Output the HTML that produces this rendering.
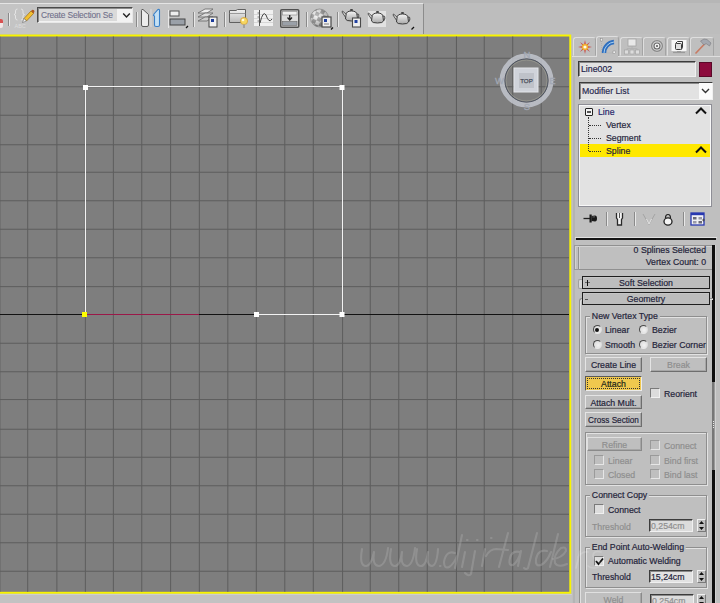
<!DOCTYPE html>
<html><head><meta charset="utf-8"><style>
*{margin:0;padding:0;box-sizing:border-box}
html,body{width:720px;height:603px;overflow:hidden;background:#bdbdbd;font-family:"Liberation Sans",sans-serif;font-size:9.5px;color:#24243a}
div,span,svg{position:absolute}
.t{white-space:nowrap;line-height:10px;letter-spacing:0px;-webkit-text-stroke:0.2px currentColor;transform:scaleX(0.92);transform-origin:0 0}
.d{color:#8e8e8e}
.btn{background:#bfbfbf;border:1px solid;border-color:#e4e4e4 #6e6e6e #6e6e6e #e4e4e4;box-shadow:inset -1px -1px 0 #a6a6a6}
.btn .t{left:-12px;right:-12px;text-align:center;transform-origin:50% 0}
.grp{border:1px solid #8e8e8e;box-shadow:1px 1px 0 #e2e2e2, inset 1px 1px 0 #e2e2e2}
.lbl{background:#bfbfbf;padding:0 2px}
.chk{width:10px;height:10px;background:#dcdcdc;border:1px solid;border-color:#7a7a7a #f0f0f0 #f0f0f0 #7a7a7a}
.chkd{background:#bfbfbf;border-color:#9a9a9a #e6e6e6 #e6e6e6 #9a9a9a}
.rad{width:9px;height:9px;border-radius:50%;background:radial-gradient(circle at 60% 60%,#f2f2f2,#d4d4d4);border:1.3px solid;border-color:#4a4a4a #dedede #e8e8e8 #4a4a4a}
.fld{background:#e2e2e2;border:1px solid;border-color:#3c3c3c #f0f0f0 #f0f0f0 #3c3c3c;box-shadow:inset 1px 1px 0 #8a8a8a}
.hdr{background:#bdbdbd;border:1px solid #1e1e1e;box-shadow:inset 1px 1px 0 #c6c6c6}
.tab{border-radius:3px 3px 0 0;border:1px solid;border-color:#dedede #a4a4a4 transparent #dedede;background:#bfbfbf}
.sep{width:1px;background:#8a8a8a;box-shadow:1px 0 0 #e8e8e8}
</style></head><body>
<div style="left:0;top:0;width:720px;height:3px;background:#b6b6b6"></div>
<div style="left:0;top:3px;width:424px;height:31px;background:#c4c4c4;border-top:1px solid #e4e4e4;border-right:1px solid #8c8c8c"></div>
<div style="left:0;top:19px;width:2.5px;height:9px;background:linear-gradient(#d85050 0,#d85050 45%,#f2e6e6 45%);border-radius:0 2px 2px 0"></div>
<div class="sep" style="left:8px;top:13px;height:13px"></div>
<svg style="left:13px;top:8px" width="22" height="22" viewBox="0 0 22 22"><path d="M4.5 1 Q2.5 1 2.5 3 L2.5 5 Q2.5 6.5 1 6.5 Q2.5 6.5 2.5 8 L2.5 10 Q2.5 12 4.5 12" fill="none" stroke="#e4e4e4" stroke-width="1"/><path d="M8 1 Q10 1 10 3 L10 5 Q10 6.5 11.5 6.5 Q10 6.5 10 8 L10 10 Q10 12 8 12" fill="none" stroke="#e4e4e4" stroke-width="1"/><path d="M11 10.5 L18 3 L20.5 5.5 L13.5 13 Z" fill="#f2c030" stroke="#9a6a10" stroke-width="0.7"/><path d="M18 3 L19 2 Q20 1.3 21 2.3 Q21.7 3.3 21.3 4 L20.5 5.5 Z" fill="#b05a20"/><path d="M11 10.5 L13.5 13 L9.5 14.5 Z" fill="#f4f4f4" stroke="#555" stroke-width="0.5"/><text x="1.5" y="19.5" font-size="5.5" fill="#dcdcdc" font-family="Liberation Sans">ABC</text></svg>
<div style="left:37px;top:7px;width:96px;height:16px;background:#f2f2f2;border:1px solid;border-color:#4a4a4a #e8e8e8 #e8e8e8 #4a4a4a;box-shadow:inset 1px 1px 0 #8a8a8a"></div>
<div style="left:39px;top:9px;width:78px;height:12px;background:#dadada"></div>
<div class="t " style="left:40.5px;top:10px;color:#70708a;font-size:9.2px;letter-spacing:-0.2px;-webkit-text-stroke:0.1px #70708a">Create Selection Se</div>
<svg style="left:122px;top:12px" width="9" height="7" viewBox="0 0 9 7"><path d="M1.2 1.5 L4.5 5 L7.8 1.5" fill="none" stroke="#222" stroke-width="1.4"/></svg>
<div class="sep" style="left:136px;top:12px;height:15px"></div>
<svg style="left:140px;top:8px" width="22" height="20" viewBox="0 0 22 20"><path d="M1.5 2.5 Q1.5 1 3 1.5 L8.5 6.5 L8.5 17 Q8.5 18.5 7 18.5 L3 18.5 Q1.5 18.5 1.5 17 Z" fill="#ececec" stroke="#5a5a5a" stroke-width="1"/><path d="M11 1 L11 19" stroke="#e4e4e4" stroke-width="0.8"/><path d="M19.5 2.5 Q19.5 1 18 1.5 L14 6 L13.5 7.5 L14.5 8 L14.5 17 Q14.5 18.5 16 18.5 L18 18.5 Q19.5 18.5 19.5 17 Z" fill="#c4e0f4" stroke="#3a80c8" stroke-width="1.1"/></svg>
<svg style="left:167px;top:9px" width="22" height="20" viewBox="0 0 22 20"><path d="M1.5 1 L1.5 19" stroke="#e8e8e8" stroke-width="1"/><rect x="3" y="2" width="9" height="5" fill="#eee" stroke="#555" stroke-width="1"/><rect x="3" y="10" width="15" height="6" fill="#9aa0a8" stroke="#444" stroke-width="1"/><path d="M19 19 L21 17" stroke="#111" stroke-width="1.2"/></svg>
<div class="sep" style="left:193px;top:12px;height:15px"></div>
<svg style="left:197px;top:8px" width="22" height="20" viewBox="0 0 22 20"><path d="M1 5 L8 1 L16 1 L10 5 Z" fill="#eee" stroke="#666" stroke-width="0.8"/><path d="M1 9 L8 5 L16 5 L10 9 Z" fill="#ddd" stroke="#666" stroke-width="0.8"/><path d="M1 13 L8 9 L16 9 L10 13 Z" fill="#ccc" stroke="#666" stroke-width="0.8"/><rect x="12" y="9" width="8" height="10" fill="#f0f0f0" stroke="#444" stroke-width="1"/><rect x="14" y="11" width="3" height="3" fill="#1a3a9a"/></svg>
<div class="sep" style="left:224px;top:12px;height:15px"></div>
<svg style="left:228px;top:8px" width="24" height="22" viewBox="0 0 24 22"><defs><linearGradient id="fg" x1="0" y1="0" x2="0" y2="1"><stop offset="0" stop-color="#f2f2f2"/><stop offset="1" stop-color="#b8b8b8"/></linearGradient></defs><path d="M1.5 2.5 L8 2.5 L9.5 1.5 L17.5 1.5 L17.5 14.5 L1.5 14.5 Z" fill="url(#fg)" stroke="#606060" stroke-width="1"/><path d="M1.5 5.5 L17.5 5.5" stroke="#888" stroke-width="0.8"/><circle cx="16" cy="13" r="3.6" fill="#f6d660" stroke="#d09a30" stroke-width="0.7"/><circle cx="15" cy="12" r="1.3" fill="#fffbe0"/><rect x="15" y="16.5" width="2" height="3.5" fill="#a0a0a0"/></svg>
<svg style="left:254px;top:9px" width="20" height="18" viewBox="0 0 20 18"><rect x="0" y="1" width="19" height="16" fill="#f0f0f0"/><path d="M0 5.5 L19 5.5 M0 9.5 L19 9.5 M0 13.5 L19 13.5" stroke="#d0d0d0" stroke-width="0.8"/><path d="M5.5 1 L5.5 17" stroke="#555" stroke-width="1"/><path d="M3.5 4 L5 4 M3.5 8 L5 8 M3.5 12 L5 12" stroke="#555" stroke-width="0.8"/><path d="M6 14 Q9 1 12 6 Q15 15 18 10" fill="none" stroke="#444" stroke-width="1"/></svg>
<svg style="left:280px;top:9px" width="20" height="19" viewBox="0 0 20 19"><rect x="0.75" y="0.75" width="18" height="17.5" rx="1" fill="#dcdcdc" stroke="#505050" stroke-width="1.5"/><rect x="2.5" y="2.5" width="14.5" height="3.5" fill="#eeeeee" stroke="#888" stroke-width="0.6"/><rect x="2.5" y="12.5" width="14.5" height="3.8" fill="#9aa0a8" stroke="#666" stroke-width="0.6"/><path d="M9.75 6 L9.75 10.5 M7.5 8.5 L9.75 11 L12 8.5" fill="none" stroke="#222" stroke-width="1.3"/></svg>
<div class="sep" style="left:306px;top:12px;height:15px"></div>
<svg style="left:309px;top:8px" width="25" height="22" viewBox="0 0 25 22"><defs><pattern id="ck" width="8" height="8" patternUnits="userSpaceOnUse" patternTransform="rotate(25)"><rect width="8" height="8" fill="#f4f4f4"/><rect width="4" height="4" fill="#9a9a9a"/><rect x="4" y="4" width="4" height="4" fill="#9a9a9a"/></pattern><radialGradient id="sh" cx="0.35" cy="0.35" r="0.7"><stop offset="0" stop-color="#fff" stop-opacity="0.3"/><stop offset="1" stop-color="#000" stop-opacity="0.35"/></radialGradient></defs><circle cx="10.5" cy="10" r="9" fill="url(#ck)"/><circle cx="10.5" cy="10" r="9" fill="url(#sh)" stroke="#777" stroke-width="0.6"/><rect x="13" y="9" width="9" height="10" fill="#eeeeee" stroke="#4a4a4a" stroke-width="1.2"/><rect x="15" y="11" width="3" height="3" fill="#2040a0"/><path d="M15 16 L20 16" stroke="#666" stroke-width="0.8"/><path d="M22 21.5 L24 19.5" stroke="#111" stroke-width="1.2"/></svg>
<div class="sep" style="left:337px;top:12px;height:15px"></div>
<svg style="left:341px;top:8px" width="22" height="22" viewBox="0 0 22 22"><defs><linearGradient id="tg" x1="0" y1="0" x2="0" y2="1"><stop offset="0" stop-color="#f6f6f6"/><stop offset="1" stop-color="#a8a8a8"/></linearGradient></defs><path d="M6 7 L1.5 3 L1 4 L5 10" fill="#e0e0e0" stroke="#444" stroke-width="0.9"/><path d="M15 6 Q19.5 5.5 17 10.5" fill="none" stroke="#555" stroke-width="1.1"/><path d="M5 7 Q5 3 10.5 3 Q16 3 16 7 L16.5 11 Q16 13 10.5 13 Q5 13 4.5 11 Z" fill="url(#tg)" stroke="#3c3c3c" stroke-width="1"/><rect x="9" y="1" width="3" height="2" rx="1" fill="#444"/><rect x="11.5" y="10" width="8" height="9" fill="#eeeeee" stroke="#4a4a4a" stroke-width="1.1"/><rect x="13.5" y="12" width="3" height="3" fill="#2040a0"/></svg>
<div style="left:368px;top:11px;width:18px;height:16px;background:#e2e2e2"></div>
<svg style="left:367px;top:10px" width="22" height="16" viewBox="0 0 22 16"><defs><linearGradient id="tg2" x1="0" y1="0" x2="0" y2="1"><stop offset="0" stop-color="#f6f6f6"/><stop offset="1" stop-color="#a8a8a8"/></linearGradient></defs><path d="M6 7 L1.5 3 L1 4 L5 10" fill="#e0e0e0" stroke="#444" stroke-width="0.9"/><path d="M15 6 Q19.5 5.5 17 10.5" fill="none" stroke="#555" stroke-width="1.1"/><path d="M5 7 Q5 3 10.5 3 Q16 3 16 7 L16.5 11 Q16 13 10.5 13 Q5 13 4.5 11 Z" fill="url(#tg2)" stroke="#3c3c3c" stroke-width="1"/><rect x="9" y="1" width="3" height="2" rx="1" fill="#444"/></svg>
<svg style="left:392px;top:11px" width="24" height="20" viewBox="0 0 24 20"><defs><linearGradient id="tg3" x1="0" y1="0" x2="0" y2="1"><stop offset="0" stop-color="#f6f6f6"/><stop offset="1" stop-color="#a8a8a8"/></linearGradient></defs><path d="M6 7 L1.5 3 L1 4 L5 10" fill="#e0e0e0" stroke="#444" stroke-width="0.9"/><path d="M15 6 Q19.5 5.5 17 10.5" fill="none" stroke="#555" stroke-width="1.1"/><path d="M5 7 Q5 3 10.5 3 Q16 3 16 7 L16.5 11 Q16 13 10.5 13 Q5 13 4.5 11 Z" fill="url(#tg3)" stroke="#3c3c3c" stroke-width="1"/><rect x="9" y="1" width="3" height="2" rx="1" fill="#444"/><path d="M19.5 18.5 L22 16" stroke="#111" stroke-width="1.2"/></svg>
<svg style="left:0;top:0" width="574" height="596" viewBox="0 0 574 596"><rect x="0" y="34.5" width="571.2" height="559.2" fill="#f8f400"/><rect x="0" y="36.5" width="569.3" height="555.3" fill="#7e7e7e"/></svg>
<div style="left:0;top:594px;width:572px;height:9px;background:#c2c2c2;border-top:1px solid #cecece"></div>
<svg style="left:0;top:0" width="570" height="592" viewBox="0 0 570 592"><defs><clipPath id="vc"><rect x="0" y="36.5" width="569.3" height="555.3"/></clipPath></defs><g clip-path="url(#vc)"><g fill="#5d5d5d"><rect x="-0.60" y="36" width="1" height="556"/><rect x="27.19" y="36" width="1" height="556"/><rect x="56.38" y="36" width="1" height="556"/><rect x="84.87" y="36" width="1" height="556"/><rect x="112.86" y="36" width="1" height="556"/><rect x="141.25" y="36" width="1" height="556"/><rect x="170.09" y="36" width="1" height="556"/><rect x="198.83" y="36" width="1" height="556"/><rect x="227.32" y="36" width="1" height="556"/><rect x="255.81" y="36" width="1" height="556"/><rect x="284.30" y="36" width="1" height="556"/><rect x="312.79" y="36" width="1" height="556"/><rect x="342.08" y="36" width="1" height="556"/><rect x="369.77" y="36" width="1" height="556"/><rect x="398.26" y="36" width="1" height="556"/><rect x="426.75" y="36" width="1" height="556"/><rect x="455.94" y="36" width="1" height="556"/><rect x="483.73" y="36" width="1" height="556"/><rect x="512.22" y="36" width="1" height="556"/><rect x="540.71" y="36" width="1" height="556"/><rect x="0" y="57.75" width="569" height="1"/><rect x="0" y="86.25" width="569" height="1"/><rect x="0" y="114.75" width="569" height="1"/><rect x="0" y="144.25" width="569" height="1"/><rect x="0" y="171.75" width="569" height="1"/><rect x="0" y="200.25" width="569" height="1"/><rect x="0" y="228.75" width="569" height="1"/><rect x="0" y="257.25" width="569" height="1"/><rect x="0" y="286.15" width="569" height="1"/><rect x="0" y="342.75" width="569" height="1"/><rect x="0" y="371.25" width="569" height="1"/><rect x="0" y="399.05" width="569" height="1"/><rect x="0" y="428.75" width="569" height="1"/><rect x="0" y="456.75" width="569" height="1"/><rect x="0" y="485.25" width="569" height="1"/><rect x="0" y="513.75" width="569" height="1"/><rect x="0" y="542.25" width="569" height="1"/><rect x="0" y="570.75" width="569" height="1"/></g><g fill="none" stroke="#acacac" stroke-opacity="0.4" stroke-width="2.1" stroke-linecap="round" stroke-linejoin="round"><path d="M362,549 Q359,566 366,566 Q371,566 374,552 Q372,566 379,566 Q386,565 388,548"/><path d="M391,549 Q388,566 395,566 Q400,566 402,552 Q400,566 407,566 Q413,565 415,548"/><path d="M417,549 Q414,566 421,566 Q426,566 428,552 Q426,566 432,566 Q437,565 438,549"/><path d="M440,566 L440.5,566"/><path d="M455,553 Q446,550 444,562 Q444,569 449,567 Q454,564 457,556 M462,535 L455,568"/><path d="M465,552 L462,567 M467,540 L467.5,540"/><path d="M475,551 L471,574 Q469,577 465,573 M477,540 L477.5,540"/><path d="M485,549 L482,566 M491,538 L491.5,538"/><path d="M508,533 L499,567 M486,556 Q490,549 496,549 L508,550"/><path d="M520,552 Q512,550 510,558 Q508,566 513,565 Q518,562 521,551 L518,566"/><path d="M537,533 L528,568 Q526,570 524,568"/><path d="M547,551 Q538,549 536,559 Q535,567 541,565 Q547,562 551,552 M558,534 L550,567"/><path d="M553,559 Q562,558 566,551 Q566,546 561,548 Q553,555 555,563 Q558,568 567,564"/></g><rect x="0" y="314" width="569" height="1" fill="#121212"/><g fill="#f2f2f2"><rect x="85" y="86" width="257" height="1"/><rect x="85" y="86" width="1" height="229"/><rect x="342" y="86" width="1" height="229"/><rect x="257" y="314" width="86" height="1"/></g><rect x="86" y="314" width="113" height="1" fill="#9a1848"/><g fill="#ffffff"><rect x="83" y="85" width="5" height="5"/><rect x="339.5" y="85" width="5" height="5"/><rect x="339.5" y="312" width="5" height="5"/><rect x="254" y="312" width="5" height="5"/></g><rect x="82" y="312" width="5" height="5" fill="#ffff00"/><g><circle cx="526.5" cy="80.5" r="24.5" fill="none" stroke="#c2c6ce" stroke-width="5" stroke-opacity="0.85"/><circle cx="526.5" cy="80.5" r="21.5" fill="none" stroke="#4c5260" stroke-width="1"/><circle cx="526.5" cy="80.5" r="20.5" fill="none" stroke="#a8a89a" stroke-width="0.8" stroke-opacity="0.7"/><rect x="514" y="68" width="24" height="24" fill="#d0d3da" stroke="#e4e6ea" stroke-width="1"/><rect x="519" y="73" width="15" height="15" fill="#bfc2c9"/><text x="526.5" y="83" text-anchor="middle" font-size="6.2" fill="#4a4e5a" stroke="#4a4e5a" stroke-width="0.25" font-family="Liberation Sans">TOP</text><g font-family="Liberation Sans" font-size="9.5" fill="#a2a8b4" stroke="#a2a8b4" stroke-width="0.3" text-anchor="middle"><text x="527" y="57.5">N</text><text x="527" y="109.5">S</text><text x="499.5" y="84">W</text><text x="552.5" y="84">E</text></g></g></g></svg>
<div style="left:572px;top:34px;width:148px;height:569px;background:#bfbfbf"></div>
<div style="left:573px;top:60px;width:2px;height:543px;background:#b4b4b4"></div>
<div class="tab" style="left:573px;top:37px;width:23px;height:19px"></div>
<div class="tab" style="left:596px;top:36px;width:23px;height:21px"></div>
<div class="tab" style="left:620px;top:37px;width:23px;height:19px"></div>
<div class="tab" style="left:643px;top:37px;width:23px;height:19px"></div>
<div class="tab" style="left:667px;top:37px;width:23px;height:19px"></div>
<div class="tab" style="left:690px;top:37px;width:24px;height:19px"></div>
<div style="left:572px;top:56px;width:148px;height:1px;background:#dedede"></div>
<div style="left:597px;top:56px;width:21px;height:2px;background:#bfbfbf"></div>
<svg style="left:578px;top:40px" width="14" height="14" viewBox="0 0 14 14"><path d="M7 0 L8 5 L12 2 L9 6 L14 7 L9 8 L12 12 L8 9 L7 14 L6 9 L2 12 L5 8 L0 7 L5 6 L2 2 L6 5 Z" fill="#c84040"/><circle cx="7" cy="7" r="3.2" fill="#f0b030"/><circle cx="7" cy="7" r="1.6" fill="#fffbe8"/></svg>
<svg style="left:600px;top:38px" width="16" height="16" viewBox="0 0 16 16"><path d="M1.5 1 L1.5 15 L14.5 15" fill="none" stroke="#a8a8a8" stroke-width="0.6" stroke-dasharray="1 1"/><path d="M4 15 A11 11 0 0 1 14 4" fill="none" stroke="#2f6fbf" stroke-width="4.4"/><path d="M4 15 A11 11 0 0 1 14 4" fill="none" stroke="#a8d0f0" stroke-width="1"/><rect x="0.5" y="0.5" width="2" height="2.5" fill="#f0f0f0" stroke="#888" stroke-width="0.5"/><rect x="13" y="13" width="2.5" height="2.5" fill="#f0f0f0" stroke="#888" stroke-width="0.5"/></svg>
<svg style="left:623px;top:38px" width="18" height="17" viewBox="0 0 18 17"><rect x="5" y="1" width="8" height="7" fill="#e8e8e8" stroke="#a4a4a4" stroke-width="0.8"/><path d="M9 8 L9 10.5 M4 10.5 L14 10.5 M4 10.5 L4 12 M14 10.5 L14 12" stroke="#b0b0b0" stroke-width="0.8"/><rect x="1.5" y="12" width="4" height="4" fill="#dcdcdc" stroke="#a0a0a0" stroke-width="0.6"/><rect x="7" y="12" width="4" height="4" fill="#dcdcdc" stroke="#a0a0a0" stroke-width="0.6"/><rect x="12.5" y="12" width="4" height="4" fill="#dcdcdc" stroke="#a0a0a0" stroke-width="0.6"/></svg>
<svg style="left:649px;top:38px" width="16" height="16" viewBox="0 0 16 16"><circle cx="8" cy="8" r="7" fill="#c4c4c4"/><circle cx="8" cy="8" r="5.4" fill="#d4d4d4" stroke="#8a8a8a" stroke-width="1.3"/><circle cx="8" cy="8" r="3" fill="#f2f2f2" stroke="#6a6a6a" stroke-width="1.1"/><circle cx="8" cy="8" r="1" fill="#555"/></svg>
<svg style="left:671px;top:39px" width="16" height="15" viewBox="0 0 16 15"><rect x="0.5" y="1" width="15" height="11" fill="#f6f6f6"/><rect x="4.5" y="4.5" width="6" height="6" rx="1" fill="#e0e0e0" stroke="#3a3a3a" stroke-width="1"/><path d="M4.5 4.5 L6.5 2.5 L11.5 2.5 L11.5 8 L10.5 10.5" fill="none" stroke="#3a3a3a" stroke-width="1"/><path d="M2 13.5 L14 13.5" stroke="#9a9a9a" stroke-width="1.2"/><rect x="6" y="12" width="4" height="1.5" fill="#9a9a9a"/></svg>
<svg style="left:694px;top:38px" width="18" height="17" viewBox="0 0 18 17"><path d="M1.5 15.5 L11 5.5" stroke="#c87a62" stroke-width="1.6"/><path d="M6.5 3 L10 1 L13 1.5 L17 5 L15.5 8 L12 5.5 L10 7 Z" fill="#a4a8b0" stroke="#7a7a80" stroke-width="0.6"/></svg>
<div class="fld" style="left:578px;top:61px;width:118px;height:16px"></div>
<div class="t " style="left:580.5px;top:64px;color:#24244a">Line002</div>
<div style="left:699px;top:62px;width:13px;height:15px;background:#8c0a3c;border:1px solid #5a0828"></div>
<div class="fld" style="left:579px;top:82px;width:134px;height:18px"></div>
<div style="left:699px;top:83px;width:13px;height:16px;background:#fbfbfb"></div>
<div class="t " style="left:581.5px;top:86px;color:#2a2a50">Modifier List</div>
<svg style="left:701px;top:88px" width="9" height="6" viewBox="0 0 9 6"><path d="M1 1 L4.5 4.5 L8 1" fill="none" stroke="#333" stroke-width="1.4"/></svg>
<div style="left:578px;top:104px;width:134px;height:103px;background:#e2e2e2;border:1px solid #8e8e96;box-shadow:inset 0 0 0 1px #f8f8f8"></div>
<div style="left:580px;top:144px;width:130px;height:13px;background:#ffe800"></div>
<div style="left:585px;top:108px;width:8px;height:8px;border:1px solid #222;background:#f4f4f4;border-radius:1px"></div>
<div style="left:587px;top:111px;width:4px;height:1.5px;background:#555"></div>
<div style="left:588px;top:117px;width:0;height:34px;border-left:1px dotted #333"></div>
<div style="left:589px;top:125px;width:12px;height:0;border-top:1px dotted #333"></div>
<div style="left:589px;top:138px;width:12px;height:0;border-top:1px dotted #333"></div>
<div style="left:589px;top:151px;width:12px;height:0;border-top:1px dotted #333"></div>
<div class="t " style="left:597.5px;top:107px;color:#25256a;font-size:9.5px">Line</div>
<div class="t " style="left:605.5px;top:120px;font-size:9.5px">Vertex</div>
<div class="t " style="left:605.5px;top:133px;font-size:9.5px">Segment</div>
<div class="t " style="left:605.5px;top:145.5px;font-size:9.5px">Spline</div>
<svg style="left:695px;top:107px" width="12" height="8" viewBox="0 0 12 8"><path d="M1 6.5 L6 1.5 L11 6.5" fill="none" stroke="#111" stroke-width="2"/></svg>
<svg style="left:695px;top:146px" width="12" height="8" viewBox="0 0 12 8"><path d="M1 6.5 L6 1.5 L11 6.5" fill="none" stroke="#111" stroke-width="2"/></svg>
<svg style="left:582px;top:212px" width="16" height="14" viewBox="0 0 16 14"><path d="M1.5 6.5 L8 6.5" stroke="#222" stroke-width="1.3"/><rect x="7.5" y="2.5" width="2.2" height="8" fill="#1a1a1a"/><path d="M9.5 4 L13 3.5 Q15 3.5 15 6.5 Q15 9.5 13 9.5 L9.5 9 Z" fill="#1a1a1a"/><path d="M10.5 5 L13 4.8" stroke="#777" stroke-width="0.8"/></svg>
<div class="sep" style="left:606px;top:212px;height:14px"></div>
<svg style="left:614px;top:212px" width="11" height="14" viewBox="0 0 11 14"><path d="M2.5 1 L2.5 6 L3.5 7.5 L3.5 13 L7.5 13 L7.5 7.5 L8.5 6 L8.5 1" fill="#f4f4f4" stroke="#2a2a2a" stroke-width="1.3"/><path d="M5.5 1 L5.5 6" stroke="#555" stroke-width="1"/></svg>
<div class="sep" style="left:634px;top:212px;height:14px"></div>
<svg style="left:642px;top:212px" width="14" height="14" viewBox="0 0 14 14"><path d="M1 2 L7 12.5 L13 2" fill="none" stroke="#a4a4a4" stroke-width="1"/><path d="M4.5 7 L7 12 L9.5 7" fill="none" stroke="#e4e4e4" stroke-width="1"/></svg>
<svg style="left:662px;top:213px" width="12" height="13" viewBox="0 0 12 13"><path d="M3.5 5 Q3.5 1.5 6 1.5 Q8.5 1.5 8.5 5" fill="none" stroke="#222" stroke-width="1.2"/><ellipse cx="6" cy="8.5" rx="4" ry="3.6" fill="#f4f4f4" stroke="#222" stroke-width="1.3"/></svg>
<div class="sep" style="left:683px;top:212px;height:14px"></div>
<svg style="left:690px;top:212px" width="16" height="15" viewBox="0 0 16 15"><rect x="1" y="1" width="13" height="12" fill="#f0f0f4" stroke="#2838b0" stroke-width="1.3"/><rect x="1" y="1" width="13" height="2.2" fill="#2838b0"/><rect x="3" y="5" width="3.5" height="2.5" fill="#6a6a78"/><rect x="8.5" y="5" width="3.5" height="2.5" fill="#9a9aa8"/><rect x="3" y="9" width="3.5" height="2.5" fill="#9a9aa8"/><rect x="8.5" y="9" width="3.5" height="2.5" fill="#6a6a78"/><path d="M12 8 L15 8 M13.5 6.5 L13.5 9.5" stroke="#444" stroke-width="0.8"/></svg>
<div style="left:575px;top:237px;width:142px;height:1px;background:#e2e2e2"></div>
<div style="left:576px;top:238px;width:140px;height:1.5px;background:#161616"></div>
<div style="left:712px;top:245px;width:3px;height:358px;background:#0e0e0e"></div>
<div style="left:712px;top:382px;width:3px;height:88px;background:#777;border-right:1px solid #9a9a9a"></div>
<div style="left:715px;top:245px;width:1px;height:358px;background:#d2d2d2"></div>
<div style="left:713px;top:421px;width:1px;height:1px;background:#e8e8e8"></div>
<div style="left:713px;top:423px;width:1px;height:1px;background:#e8e8e8"></div>
<div style="left:713px;top:425px;width:1px;height:1px;background:#e8e8e8"></div>
<div style="left:713px;top:427px;width:1px;height:1px;background:#e8e8e8"></div>
<div style="left:578px;top:245px;width:134px;height:25px;border:1px solid #909090;border-right:none;box-shadow:inset 1px 1px 0 #d2d2d2"></div>
<div style="left:574px;top:245px;width:5px;height:25px;border:1px solid #9a9a9a;border-right:none;box-shadow:inset 1px 1px 0 #d2d2d2"></div>
<div class="t " style="left:620px;top:245px;width:86px;text-align:right;transform-origin:100% 0">0 Splines Selected</div>
<div class="t " style="left:620px;top:256.5px;width:86px;text-align:right;transform-origin:100% 0">Vertex Count: 0</div>
<div style="left:578px;top:279px;width:4px;height:10px;border:1px solid #a0a0a0;border-right:none;border-radius:2px 0 0 2px;background:#d8d8d8"></div>
<div class="hdr" style="left:582px;top:276px;width:128px;height:13px"></div>
<div style="left:585px;top:282.3px;width:5px;height:1px;background:#666"></div>
<div style="left:586.6px;top:280px;width:1.6px;height:5.8px;background:#111"></div>
<div class="t " style="left:582px;top:277.5px;width:128px;text-align:center;transform-origin:50% 0">Soft Selection</div>
<div style="left:579px;top:298px;width:134px;height:320px;border:1px solid #909090;border-right:none;border-radius:3px 0 0 0;box-shadow:inset 1px 1px 0 #e0e0e0"></div>
<div class="hdr" style="left:582px;top:292px;width:128px;height:13px"></div>
<div style="left:585px;top:298.5px;width:3px;height:1.2px;background:#555"></div>
<div class="t " style="left:582px;top:293.5px;width:128px;text-align:center;transform-origin:50% 0">Geometry</div>
<div class="grp" style="left:585px;top:316px;width:122px;height:38px"></div>
<div class="t lbl" style="left:590px;top:311px;">New Vertex Type</div>
<div class="rad" style="left:592.5px;top:325px"></div><div style="left:595px;top:327.5px;width:4px;height:4px;border-radius:50%;background:#111"></div>
<div class="t " style="left:605px;top:325px;">Linear</div>
<div class="rad" style="left:639px;top:325px"></div>
<div class="t " style="left:651.5px;top:325px;">Bezier</div>
<div class="rad" style="left:592.5px;top:339.5px"></div>
<div class="t " style="left:605px;top:339.5px;">Smooth</div>
<div class="rad" style="left:639px;top:339.5px"></div>
<div class="t " style="left:651.5px;top:339.5px;">Bezier Corner</div>
<div class="btn" style="left:585px;top:357px;width:57px;height:15px"><div class="t " style="left:-12px;top:2px;">Create Line</div></div>
<div class="btn" style="left:650px;top:357px;width:57px;height:15px"><div class="t d" style="left:-12px;top:2px;">Break</div></div>
<div style="left:585px;top:376px;width:57px;height:15px;background:#f0c84e;border:1px solid;border-color:#5a5a5a #ececec #ececec #5a5a5a"></div>
<div style="left:587px;top:378px;width:53px;height:11px;border:1px dotted #333"></div>
<div class="t " style="left:585px;top:378.5px;width:57px;text-align:center;color:#1a2418;transform-origin:50% 0">Attach</div>
<div class="chk" style="left:650px;top:388px"></div>
<div class="t " style="left:664px;top:388.5px;">Reorient</div>
<div class="btn" style="left:585px;top:395px;width:57px;height:14px"><div class="t " style="left:-12px;top:1.5px;">Attach Mult.</div></div>
<div class="btn" style="left:585px;top:412px;width:57px;height:15px"><div class="t " style="left:-12px;top:2px;transform:scaleX(0.86)">Cross Section</div></div>
<div class="grp" style="left:585px;top:432px;width:122px;height:53px"></div>
<div class="btn" style="left:587px;top:437px;width:55px;height:14px;border-color:#e0e0e0 #8a8a8a #8a8a8a #e0e0e0"><div class="t d" style="left:-12px;top:1.5px;">Refine</div></div>
<div class="chk chkd" style="left:650px;top:440px"></div>
<div class="t d" style="left:664px;top:440.5px;">Connect</div>
<div class="chk chkd" style="left:594px;top:455px"></div>
<div class="t d" style="left:608px;top:455.5px;">Linear</div>
<div class="chk chkd" style="left:650px;top:455px"></div>
<div class="t d" style="left:664px;top:455.5px;">Bind first</div>
<div class="chk chkd" style="left:594px;top:469px"></div>
<div class="t d" style="left:608px;top:469.5px;">Closed</div>
<div class="chk chkd" style="left:650px;top:469px"></div>
<div class="t d" style="left:664px;top:469.5px;">Bind last</div>
<div class="grp" style="left:585px;top:495px;width:122px;height:42px"></div>
<div class="t lbl" style="left:590px;top:490px;">Connect Copy</div>
<div class="chk" style="left:594px;top:504px"></div>
<div class="t " style="left:608px;top:504.5px;">Connect</div>
<div class="t d" style="left:592px;top:521.5px;">Threshold</div>
<div class="fld" style="left:649px;top:519px;width:44px;height:13px;background:#dcdcdc"></div>
<div class="t d" style="left:651px;top:521px;">0,254cm</div>
<div style="left:697px;top:519px;width:9px;height:13px;border:1px solid;border-color:#f0f0f0 #7a7a7a #7a7a7a #f0f0f0"></div><svg style="left:698px;top:520px" width="7" height="11" viewBox="0 0 7 11"><path d="M1 4 L3.5 1 L6 4 Z M1 7 L3.5 10 L6 7 Z" fill="#111"/></svg>
<div class="grp" style="left:585px;top:547px;width:122px;height:41px"></div>
<div class="t lbl" style="left:590px;top:542px;">End Point Auto-Welding</div>
<div class="chk" style="left:594px;top:556px"></div>
<svg style="left:595px;top:557px" width="9" height="9" viewBox="0 0 9 9"><path d="M1 4 L3.5 7 L8 1.5" fill="none" stroke="#111" stroke-width="1.8"/></svg>
<div class="t " style="left:608px;top:556px;">Automatic Welding</div>
<div class="t " style="left:592px;top:572px;">Threshold</div>
<div class="fld" style="left:649px;top:570px;width:44px;height:13px"></div>
<div class="t " style="left:651px;top:572px;">15,24cm</div>
<div style="left:697px;top:570px;width:9px;height:13px;border:1px solid;border-color:#f0f0f0 #7a7a7a #7a7a7a #f0f0f0"></div><svg style="left:698px;top:571px" width="7" height="11" viewBox="0 0 7 11"><path d="M1 4 L3.5 1 L6 4 Z M1 7 L3.5 10 L6 7 Z" fill="#111"/></svg>
<div class="btn" style="left:585px;top:592px;width:57px;height:15px;border-color:#e0e0e0 #8a8a8a #8a8a8a #e0e0e0"><div class="t d" style="left:-12px;top:2px;">Weld</div></div>
<div class="fld" style="left:650px;top:594px;width:44px;height:13px;background:#dcdcdc"></div>
<div class="t d" style="left:652px;top:596px;">0,254cm</div>
<div style="left:697px;top:594px;width:9px;height:13px;border:1px solid;border-color:#f0f0f0 #7a7a7a #7a7a7a #f0f0f0"></div><svg style="left:698px;top:595px" width="7" height="11" viewBox="0 0 7 11"><path d="M1 4 L3.5 1 L6 4 Z M1 7 L3.5 10 L6 7 Z" fill="#111"/></svg>
<svg style="left:560px;top:530px" width="60" height="50" viewBox="560 530 60 50"><g fill="none" stroke="#ffffff" stroke-opacity="0.16" stroke-width="1.7" stroke-linecap="round"><path d="M580,551 L576,568 M578,557 Q582,551 588,552"/><path d="M601,552 Q593,550 593,556 Q595,560 599,561 Q603,567 594,568 Q590,568 588,566"/></g></svg>
</body></html>
